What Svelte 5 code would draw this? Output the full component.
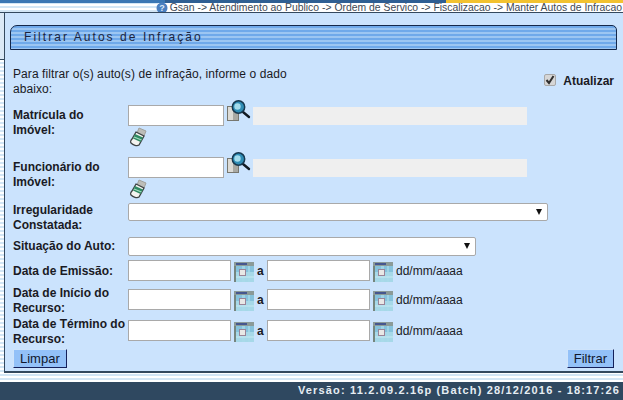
<script>
    const dateRows = [
        { label: ["Data de Emissão:"], cls: "r-emissao" },
        { label: ["Data de Início do", "Recurso:"], cls: "r-inicio" },
        { label: ["Data de Término do", "Recurso:"], cls: "r-termino" },
    ];
</script>

{#snippet lookup()}
    <svg class="lookup" width="25" height="24" viewBox="0 0 25 24">
        <rect x="1.500" y="6.500" width="11" height="14" fill="#a9a9a3" stroke="#77776f" />
        <path d="M2 7h5v13H2z" fill="#dcdbd6" />
        <path d="M17 12l6 5" stroke="#121a22" stroke-width="2.400" stroke-linecap="round" />
        <circle cx="12.500" cy="7" r="6.200" fill="#2f8db5" stroke="#17384f" stroke-width="1.500" />
        <circle cx="11.500" cy="6.500" r="3.200" fill="#a4dcec" />
    </svg>
{/snippet}

{#snippet eraser()}
    <svg class="eraser" width="20" height="22" viewBox="0 0 20 22">
        <path d="M10 2l7 3-2 5-7-3z" fill="#bdbdb8" stroke="#a0a09b" />
        <path d="M7 6l8 4-5 9c-2 1.500-6 0-8-2-1-1 0-3 1-4z" fill="#f4f4f0" stroke="#3f4344" stroke-width="1.300" />
        <path d="M6 8l8 3.500-2.500 4.500-7.500-3.500z" fill="#2f8a63" />
        <path d="M5 11l7.500 3" stroke="#a5dcc0" stroke-width="1.200" />
    </svg>
{/snippet}

{#snippet calendar()}
    <svg class="cal" width="20" height="20" viewBox="0 0 20 20">
        <rect width="20" height="20" fill="#86c2dc" />
        <path d="M2 10h18v10H2z" fill="#a6d8e8" />
        <path d="M8 4h3v16H8zM14 4h2v16h-2z" fill="#a9dbe9" opacity="0.700" />
        <path d="M2 14h18v2H2z" fill="#bfe6f0" opacity="0.700" />
        <rect x="0" y="0" width="20" height="4" fill="#8b9a98" />
        <rect x="2" y="1" width="11" height="2" fill="#46578f" />
        <rect x="0" y="4" width="2" height="16" fill="#76857f" />
        <rect x="5.500" y="7.500" width="6" height="6" fill="#e8e8e6" stroke="#9a8498" />
    </svg>
{/snippet}

<div class="page">
    <div class="topbar"></div>
    <div class="crumb">
        <svg width="12" height="12" viewBox="0 0 12 12">
            <circle cx="6" cy="6" r="5.500" fill="#4a7fc0" />
            <text x="6" y="9" text-anchor="middle" class="q">?</text>
        </svg>
        <span>Gsan -&gt; Atendimento ao Publico -&gt; Ordem de Servico -&gt; Fiscalizacao -&gt; Manter Autos de Infracao</span>
    </div>

    <div class="shell">
        <div class="side"></div>
        <div class="modal">
            <div class="title">Filtrar Autos de Infração</div>

            <div class="intro">
                <p>Para filtrar o(s) auto(s) de infração, informe o dado abaixo:</p>
                <label class="refresh">
                    <span class="check">
                        <svg width="10" height="10" viewBox="0 0 10 10">
                            <path d="M1.500 5l2.500 3 4.500-7" fill="none" stroke="#2f2f2f" stroke-width="2" />
                        </svg>
                    </span>
                    Atualizar
                </label>
            </div>

            <div class="row r-lookup first">
                <div class="lbl">Matrícula do<br />Imóvel:</div>
                <div class="ctl">
                    <div class="line">
                        <span class="input code"></span>
                        {@render lookup()}
                        <span class="readonly"></span>
                    </div>
                    {@render eraser()}
                </div>
            </div>

            <div class="row r-lookup second">
                <div class="lbl">Funcionário do<br />Imóvel:</div>
                <div class="ctl">
                    <div class="line">
                        <span class="input code"></span>
                        {@render lookup()}
                        <span class="readonly"></span>
                    </div>
                    {@render eraser()}
                </div>
            </div>

            <div class="row r-irreg">
                <div class="lbl">Irregularidade<br />Constatada:</div>
                <div class="select wide"><span class="arrow"></span></div>
            </div>

            <div class="row r-sit">
                <div class="lbl">Situação do Auto:</div>
                <div class="select narrow"><span class="arrow"></span></div>
            </div>

            {#each dateRows as d}
                <div class="row date {d.cls}">
                    <div class="lbl">
                        {#each d.label as t, i}{#if i > 0}<br />{/if}{t}{/each}
                    </div>
                    <div class="line">
                        <span class="input dt"></span>
                        {@render calendar()}
                        <b class="a">a</b>
                        <span class="input dt"></span>
                        {@render calendar()}
                        <span class="fmt">dd/mm/aaaa</span>
                    </div>
                </div>
            {/each}

            <div class="actions">
                <button>Limpar</button>
                <button>Filtrar</button>
            </div>
        </div>
    </div>

    <div class="gap"></div>
    <div class="footer">Versão: 11.2.09.2.16p (Batch) 28/12/2016 - 18:17:26</div>
</div>

<style>
    :global(body) {
        margin: 0;
    }

    .page {
        width: 623px;
        height: 400px;
        overflow: hidden;
        display: flex;
        flex-direction: column;
        font-family: "Liberation Sans", Arial, sans-serif;
        background: repeating-linear-gradient(#ffffff 0 2px, #d3e6f5 2px 4px);
    }

    .topbar {
        height: 3px;
        flex: none;
        background: linear-gradient(90deg, #3a77b4 0 165px, #2f5f93 165px 446px, #f2c230 446px);
    }

    .crumb {
        height: 9px;
        flex: none;
        display: flex;
        justify-content: flex-end;
        align-items: center;
        gap: 2px;
        padding-right: 1px;
        font-size: 10.400px;
        color: #3f4a55;
        background: linear-gradient(90deg, transparent 158px, #fff 158px);
        white-space: nowrap;
    }

    .crumb span {
        line-height: 9px;
    }

    .crumb svg {
        margin-top: 1px;
    }

    .q {
        font-size: 9px;
        font-weight: bold;
        fill: #dfeaf7;
    }

    .shell {
        display: flex;
        height: 361px;
        flex: none;
    }

    .side {
        width: 4px;
        height: 48px;
        box-sizing: border-box;
        background: #dbe9f6;
        border-top: 1px solid #34495e;
        border-bottom: 1px solid #34495e;
    }

    .modal {
        flex: 1;
        box-sizing: border-box;
        position: relative;
        border: 1px solid #34495e;
        border-right: 0;
        border-bottom-width: 2px;
        background: #cbe3fd;
        padding: 12px 6px 0 5px;
        color: #1a1a24;
    }

    .title {
        height: 25px;
        box-sizing: border-box;
        padding-left: 13px;
        line-height: 23px;
        font-size: 12px;
        letter-spacing: 2.050px;
        color: #1c2540;
        border: 1px solid #14284a;
        border-radius: 7px 5px 0 0;
        background: repeating-linear-gradient(#6fa9ea 0 2px, #9cc6f2 2px 4px);
    }

    .intro {
        display: flex;
        justify-content: space-between;
        height: 55px;
        padding: 17px 0 0 3px;
        box-sizing: border-box;
    }

    .intro p {
        margin: 0;
        width: 300px;
        font-size: 12px;
        letter-spacing: 0.080px;
        line-height: 15px;
    }

    .refresh {
        display: flex;
        align-items: flex-start;
        gap: 7px;
        font-size: 12px;
        font-weight: bold;
        margin-right: 3px;
        padding-top: 7px;
    }

    .check {
        width: 10px;
        height: 10px;
        border: 1px solid #a8a8a8;
        border-radius: 2px;
        background: #d6d6d6;
        display: block;
    }

    .check svg {
        display: block;
    }

    .row {
        display: flex;
        padding-left: 3px;
    }

    .lbl {
        width: 115px;
        flex: none;
        font-size: 12px;
        font-weight: bold;
        line-height: 15px;
    }

    .first {
        height: 52px;
    }

    .second {
        height: 46px;
    }

    .r-lookup .lbl {
        padding-top: 3px;
    }

    .line {
        display: flex;
        align-items: center;
    }

    .input {
        display: block;
        box-sizing: border-box;
        background: #fff;
        border: 1px solid #a9a9a9;
    }

    .code {
        width: 96px;
        height: 21px;
    }

    .lookup {
        margin: -7px 2px 0 2px;
        flex: none;
    }

    .readonly {
        display: block;
        width: 274px;
        height: 18px;
        background: #efefef;
    }

    .eraser {
        display: block;
        margin: 0 0 0 1px;
    }

    .r-irreg {
        height: 34px;
    }

    .r-irreg .lbl {
        margin-top: 0;
    }

    .select {
        box-sizing: border-box;
        height: 18px;
        background: #fff;
        border: 1px solid #a9a9a9;
        border-radius: 2px;
        position: relative;
    }

    .wide {
        width: 420px;
    }

    .narrow {
        width: 348px;
        height: 19px;
    }

    .arrow {
        position: absolute;
        right: 5px;
        top: 5px;
        border-left: 3.500px solid transparent;
        border-right: 3.500px solid transparent;
        border-top: 6px solid #111;
    }

    .r-sit {
        height: 23px;
    }

    .r-sit .lbl {
        padding-top: 2px;
    }

    .date {
        height: 29px;
    }

    .r-emissao .lbl {
        padding-top: 4px;
    }

    .r-inicio {
        height: 31px;
    }

    .r-inicio .lbl {
        margin-top: -3px;
    }

    .r-termino .lbl {
        margin-top: -3px;
    }

    .date .line {
        height: 21px;
    }

    .dt {
        width: 103px;
        height: 21px;
    }

    .cal {
        margin: 3px 3px 0 3px;
        flex: none;
    }

    .a {
        font-size: 12px;
        width: 10px;
    }

    .fmt {
        font-size: 12px;
    }

    .actions {
        display: flex;
        justify-content: space-between;
        padding: 0 3px;
    }

    button {
        box-sizing: border-box;
        height: 19px;
        padding: 0 6px;
        margin: 0;
        font-family: inherit;
        font-size: 13px;
        line-height: 15px;
        color: #10182c;
        background: #93c1f8;
        border: 1px solid;
        border-color: #cfe4fb #14205a #14205a #cfe4fb;
    }

    .gap {
        flex: none;
        height: 9px;
    }

    .footer {
        flex: 1;
        background: #2f4860;
        color: #e6edf3;
        font-size: 11px;
        font-weight: bold;
        letter-spacing: 1.160px;
        line-height: 17px;
        text-align: right;
        padding-right: 3px;
        white-space: nowrap;
    }
</style>
